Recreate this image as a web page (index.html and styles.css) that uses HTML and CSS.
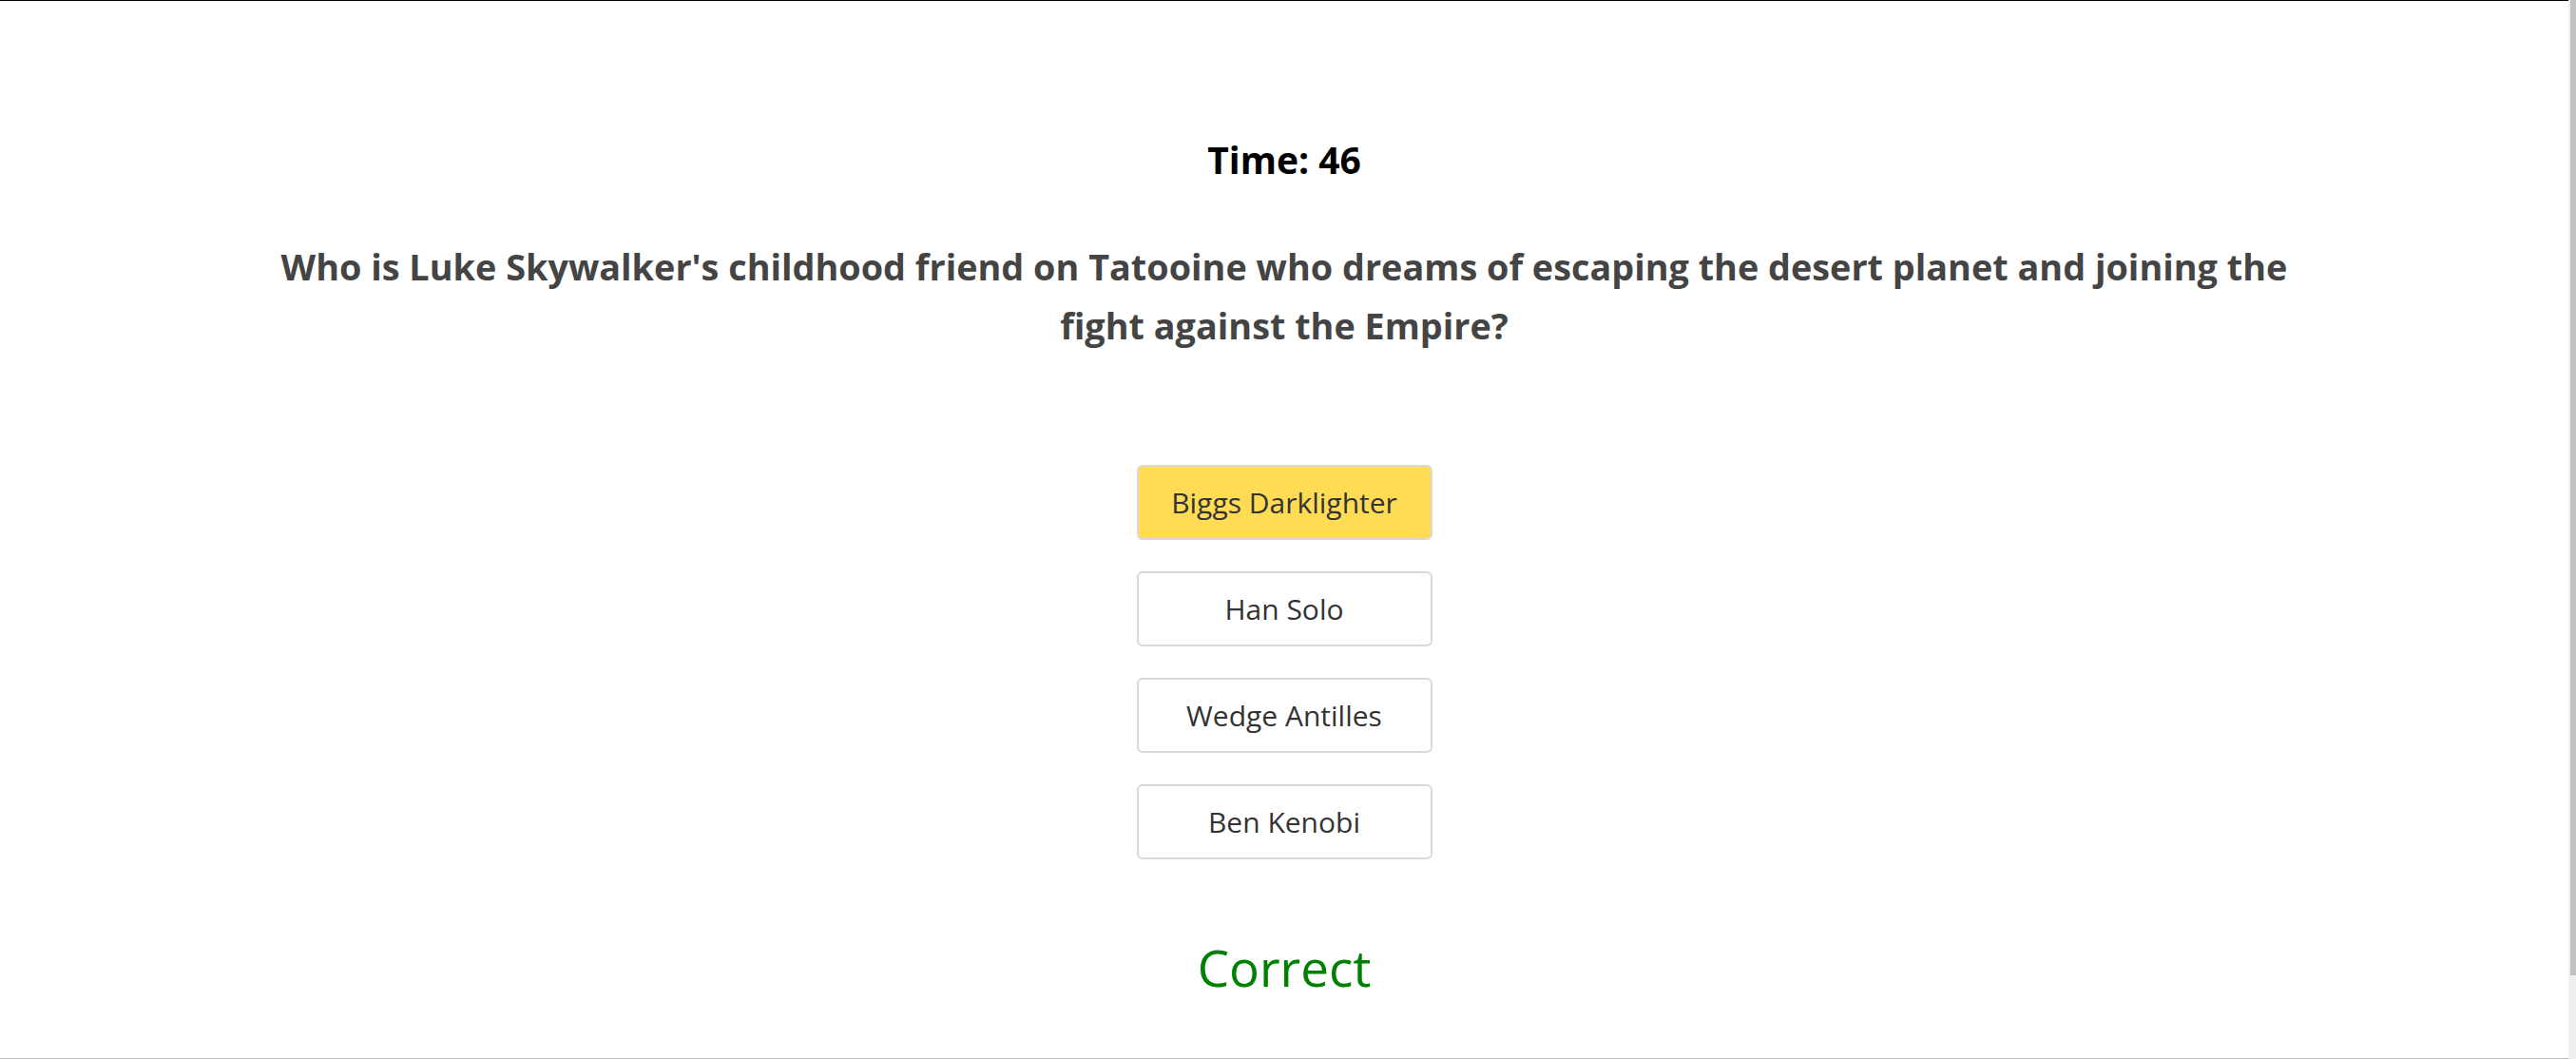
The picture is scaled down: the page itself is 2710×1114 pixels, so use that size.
FILE: index.html
```html
<!DOCTYPE html>
<html lang="en">
<head>
<meta charset="utf-8">
<title>Quiz</title>
<link rel="stylesheet" href="styles.css">
</head>
<body>
<main class="page">
  <div class="quiz">
    <h2 class="timer">Time: 46</h2>
    <h2 class="question">Who is Luke Skywalker's childhood friend on Tatooine who dreams of escaping the desert planet and joining the fight against the Empire?</h2>
    <div class="choices">
      <button class="choice choice-selected">Biggs Darklighter</button>
      <button class="choice">Han Solo</button>
      <button class="choice">Wedge Antilles</button>
      <button class="choice">Ben Kenobi</button>
    </div>
    <p class="result">Correct</p>
  </div>
</main>
<aside class="scrollbar"><div class="scrollbar-thumb"></div></aside>
</body>
</html>
```
FILE: styles.css
```css
html, body {
  margin: 0;
  padding: 0;
  height: 100%;
}
body {
  display: flex;
  overflow: hidden;
  background: #fff;
  font-family: "Open Sans", "Noto Sans", sans-serif;
}
.page {
  flex: 1;
  border-top: 1px solid #000;
  border-bottom: 1px solid #bdbdbd;
  box-sizing: border-box;
  height: 100%;
}
.quiz {
  display: flex;
  flex-direction: column;
  align-items: center;
  text-align: center;
}
.timer {
  margin: 143px 0 0;
  font-size: 39px;
  line-height: 47px;
  font-weight: 700;
  color: #000;
}
.question {
  margin: 59px 0 0;
  max-width: 2150px;
  font-size: 37.8px;
  line-height: 62px;
  font-weight: 700;
  color: #444;
}
.choices {
  margin-top: 115px;
  display: flex;
  flex-direction: column;
  gap: 33px;
}
.choice {
  width: 311px;
  height: 79px;
  box-sizing: border-box;
  border: 2px solid #d9d9d9;
  border-radius: 6px;
  background: #fff;
  color: #333;
  font-family: "Open Sans", "Noto Sans", sans-serif;
  font-size: 30px;
  padding: 0;
}
.choice-selected {
  background: #ffdc54;
}
.result {
  margin: 82px 0 0;
  font-size: 53px;
  line-height: 64px;
  font-weight: 500;
  color: #008000;
}
.scrollbar {
  width: 8px;
  height: 100%;
  background: #efefef;
  padding-left: 2px;
  box-sizing: border-box;
}
.scrollbar-thumb {
  height: 1026px;
  background: #c1c1c1;
}
```
